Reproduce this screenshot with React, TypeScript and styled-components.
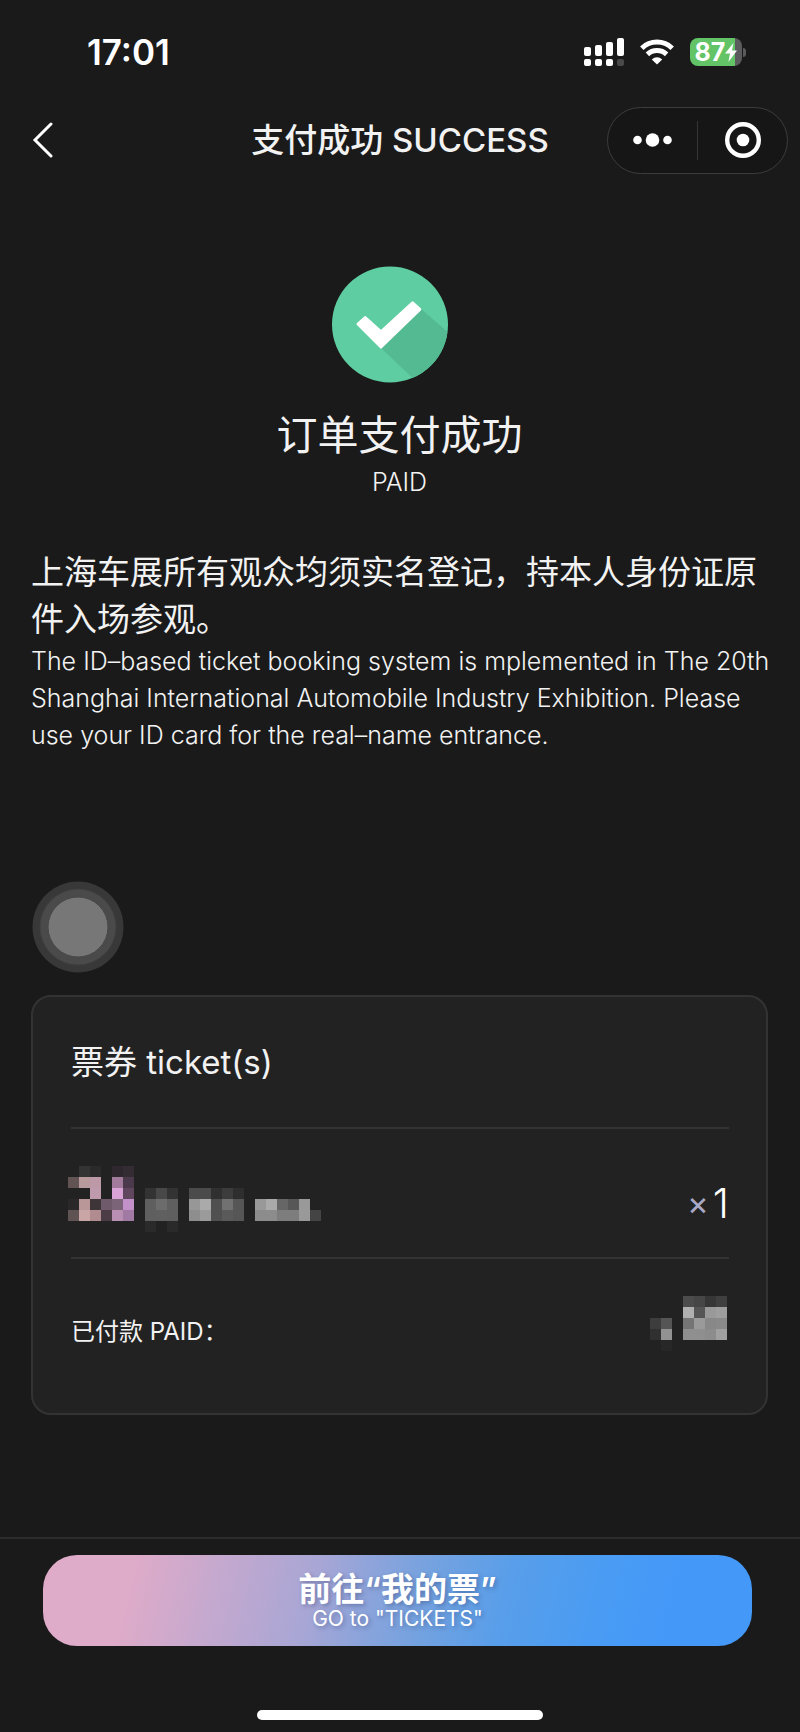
import React from "react";
import styled, { createGlobalStyle } from "styled-components";

const GlobalStyle = createGlobalStyle`
  * { box-sizing: border-box; }
  body {
    margin: 0;
    background: #1a1a1a;
    color: #f2f2f2;
    font-family: Inter, "Noto Sans CJK SC", sans-serif;
  }
  h1, h2, p { margin: 0; font-weight: 400; }
  button { font: inherit; color: inherit; border: 0; padding: 0; background: none; cursor: pointer; }
`;

const Page = styled.div`
  position: relative;
  display: flex;
  flex-direction: column;
  min-height: 100vh;
`;

const StatusBar = styled.div`
  display: flex;
  align-items: center;
  justify-content: space-between;
  height: 104px;
  padding: 0 54px 0 87px;
  color: #fff;
`;

const Clock = styled.time`
  font-size: 35px;
  line-height: 40px;
  font-weight: 600;
`;

const StatusIcons = styled.div`
  display: flex;
  align-items: center;
  gap: 16px;
`;

const Battery = styled.div`
  display: flex;
  align-items: center;
  gap: 1px;
`;

const BatteryBody = styled.div`
  display: flex;
  align-items: center;
  justify-content: center;
  width: 52px;
  height: 28px;
  border-radius: 8px;
  background: linear-gradient(90deg, #62c466 86%, #5b5b5d 86%);
  font-size: 25px;
  line-height: 28px;
  font-weight: 700;
`;

const BatteryCap = styled.span`
  width: 3px;
  height: 9px;
  border-radius: 0 3px 3px 0;
  background: #5b5b5d;
`;

const NavBar = styled.header`
  display: grid;
  grid-template-columns: 1fr auto 1fr;
  align-items: center;
  height: 72px;
  padding: 0 12px;
`;

const BackButton = styled.button`
  display: flex;
  justify-self: start;
  margin-left: 20px;
`;

const NavTitle = styled.h1`
  font-size: 33px;
  line-height: 48px;
  font-weight: 500;
  white-space: nowrap;
`;

const Capsule = styled.div`
  justify-self: end;
  display: flex;
  align-items: center;
  width: 181px;
  height: 67px;
  border: 1px solid #3c3c3c;
  border-radius: 34px;
  background: #161616;
`;

const CapsuleButton = styled.button`
  flex: 1;
  display: flex;
  align-items: center;
  justify-content: center;
  height: 100%;
`;

const CapsuleDivider = styled.span`
  width: 1px;
  height: 39px;
  background: #353535;
`;

const Main = styled.main`
  flex: 1;
  padding: 90px 32px 0 31px;
`;

const Result = styled.section`
  display: flex;
  flex-direction: column;
  align-items: center;
`;

const ResultTitle = styled.h2`
  margin-top: 22px;
  font-size: 41px;
  line-height: 60px;
`;

const ResultCaption = styled.p`
  font-size: 25px;
  line-height: 34px;
  font-weight: 300;
`;

const Notice = styled.section`
  margin: 50px -8px 0 0;
`;

const NoticeLead = styled.p`
  font-size: 33px;
  line-height: 47px;
`;

const NoticeText = styled.p`
  font-size: 25px;
  line-height: 37px;
  font-weight: 300;
`;

const TicketCard = styled.section`
  margin-top: 241px;
  padding: 0 37px 0 38px;
  border: 2px solid #333;
  border-radius: 20px;
  background: #222;
`;

const CardRow = styled.div<{ $height: number; $padTop?: number; $padBottom?: number }>`
  display: flex;
  align-items: center;
  justify-content: space-between;
  height: ${(p) => p.$height}px;
  padding-top: ${(p) => p.$padTop ?? 0}px;
  padding-bottom: ${(p) => p.$padBottom ?? 0}px;

  & + & { border-top: 2px solid #333; }
`;

const CardTitle = styled.h2`
  font-size: 33px;
  line-height: 48px;
`;

const Quantity = styled.span`
  display: flex;
  align-items: center;
  gap: 4px;
  padding-top: 8px;
  font-size: 41px;
  line-height: 48px;
  font-weight: 300;
  color: #fff;
`;

const Times = styled.span`
  font-size: 33px;
  font-weight: 400;
  color: #a9a9c6;
`;

const PaidLabel = styled.span`
  font-size: 24px;
  line-height: 36px;
`;

const AssistiveTouch = styled.button`
  position: absolute;
  left: 32px;
  top: 881px;
  display: flex;
`;

const Footer = styled.footer`
  display: flex;
  flex-direction: column;
  align-items: center;
  padding: 16px 48px 12px 43px;
  border-top: 2px solid #2c2c2c;
`;

const PrimaryButton = styled.button`
  display: flex;
  flex-direction: column;
  align-items: center;
  justify-content: center;
  width: 100%;
  height: 91px;
  border-radius: 34px;
  background: linear-gradient(104deg, #deabc9 13%, #a8a6d5 38%, #8fa4da 45%, #76a2df 53%, #589eea 65%, #4a9cf3 77%, #4498f8 88%);
  color: #fff;
  text-shadow: 2px 2px 4px rgba(40, 60, 110, 0.4);
`;

const ButtonLabel = styled.span`
  font-size: 33px;
  line-height: 36px;
  font-weight: 600;
`;

const ButtonCaption = styled.span`
  font-size: 21px;
  line-height: 24px;
`;

const HomeIndicator = styled.div`
  width: 286px;
  height: 10px;
  margin: 64px 0 0 5px;
  border-radius: 5px;
  background: #fff;
`;

const CELL = 11;

const NAME_CELLS = [
  [, "#333", "#2a2a2a", , "#2e282e", "#332d33"],
  ["#635454", "#b89a9c", "#bd98a6", , "#a27a9c", "#4b3a4b"],
  [, , "#bf9aac", , "#d9a3d6", "#60465f", , "#333", "#484848", "#333", , "#4b4b4b", "#4b4b4b", "#303030", "#3c3c3c", "#2e2e2e"],
  ["#2a2828", "#b99799", "#3d3538", "#6f5a6c", "#7b6478", "#c490c9", , "#5f5f5f", "#6c6c6c", "#5f5f5f", , "#979797", "#aaa", "#505050", "#717171", "#565656", , "#999", "#aaa", "#666", "#575757", "#999"],
  ["#5f5353", "#caa5a6", "#b08c91", "#4b3c46", "#b88eb3", "#a07aa3", , "#5f5f5f", "#606060", "#5f5f5f", , "#8e8e8e", "#9b9b9b", "#505050", "#5a5a5a", "#565656", , "#8c8c8c", "#8c8c8c", "#7d7d7d", "#7d7d7d", "#999", "#444"],
  [, , , , , , , "#2a2a2a", , "#2a2a2a"],
];

const PRICE_CELLS = [
  [, , , "#4c4c4c", "#464646", "#363636", "#3f3f3f"],
  [, , , "#b0b0b0", "#555", "#999", "#9e9e9e"],
  ["#3d3d3d", "#555", , "#757575", "#9a9a9a", "#888", "#8a8a8a"],
  ["#303030", "#929292", , "#8f8f8f", "#8f8f8f", "#8c8c8c", "#a0a0a0"],
  [, "#272727"],
];

const MosaicSvg = styled.svg<{ $lift: number }>`
  display: block;
  margin: 0 2px ${(p) => p.$lift}px -3px;
`;

function Mosaic({
  cells,
  columns,
  label,
  lift = 0,
}: {
  cells: (string | undefined)[][];
  columns: number;
  label: string;
  lift?: number;
}) {
  return (
    <MosaicSvg
      $lift={lift}
      width={columns * CELL}
      height={cells.length * CELL}
      shapeRendering="crispEdges"
      role="img"
      aria-label={label}
    >
      {cells.map((row, y) =>
        row.map((fill, x) =>
          fill ? <rect key={`${x}-${y}`} x={x * CELL} y={y * CELL} width={CELL} height={CELL} fill={fill} /> : null
        )
      )}
    </MosaicSvg>
  );
}

function SignalIcon() {
  return (
    <svg width="40" height="28" fill="#fff" aria-hidden="true">
      <rect x="0" y="9" width="7" height="9" rx="2" />
      <rect x="11" y="7" width="7" height="11" rx="2" />
      <rect x="22" y="4" width="7" height="14" rx="2" />
      <rect x="33" y="0" width="7" height="18" rx="2" />
      <rect x="0" y="21" width="7" height="7" rx="2" />
      <rect x="11" y="21" width="7" height="7" rx="2" />
      <rect x="22" y="21" width="7" height="7" rx="2" />
      <rect x="33" y="21" width="7" height="7" rx="2" fill="#4a4a4a" />
    </svg>
  );
}

function WifiIcon() {
  return (
    <svg width="34" height="26" viewBox="0 0 34 26" fill="none" stroke="#fff" strokeWidth="5" aria-hidden="true">
      <path d="M1.8 9.2 A22 22 0 0 1 32.2 9.2" />
      <path d="M7.4 15.4 A14 14 0 0 1 26.6 15.4" />
      <path d="M17 25.6 L11.8 20.4 A7.6 7.6 0 0 1 22.2 20.4 Z" fill="#fff" stroke="none" />
    </svg>
  );
}

function BoltIcon() {
  return (
    <svg width="12" height="19" viewBox="0 0 12 19" fill="#fff" aria-hidden="true">
      <path d="M8.4 0 L0 10.4 H5 L3.4 19 L12 7.6 H7 Z" />
    </svg>
  );
}

function SuccessIcon() {
  return (
    <svg width="136" height="117" viewBox="0 0 136 117" role="img" aria-label="Success">
      <defs>
        <clipPath id="disc">
          <circle cx="58" cy="58.5" r="58" />
        </clipPath>
      </defs>
      <circle cx="58" cy="58.5" r="58" fill="#5ecda1" />
      <path d="M88 42 L134 82 L110 140 L49 82 Z" fill="#54ba92" clipPath="url(#disc)" />
      <path
        d="M26 58 L33.2 51.6 L49 65.8 L80.6 36.8 L87.8 43.4 L49 81 Z"
        fill="#fff"
        stroke="#fff"
        strokeWidth="3"
        strokeLinejoin="round"
      />
    </svg>
  );
}

export default function App() {
  return (
    <Page lang="zh-CN">
      <GlobalStyle />
      <StatusBar>
        <Clock>17:01</Clock>
        <StatusIcons>
          <SignalIcon />
          <WifiIcon />
          <Battery>
            <BatteryBody>
              87
              <BoltIcon />
            </BatteryBody>
            <BatteryCap />
          </Battery>
        </StatusIcons>
      </StatusBar>

      <NavBar>
        <BackButton aria-label="Back">
          <svg width="22" height="36" fill="none" stroke="#fff" strokeWidth="3" strokeLinecap="round">
            <path d="M19 2 L3 18 L19 34" />
          </svg>
        </BackButton>
        <NavTitle>支付成功 SUCCESS</NavTitle>
        <Capsule>
          <CapsuleButton aria-label="More">
            <svg width="39" height="14" fill="#fff">
              <circle cx="4.5" cy="7" r="4.3" />
              <circle cx="19.5" cy="7" r="6.8" />
              <circle cx="34.5" cy="7" r="4.3" />
            </svg>
          </CapsuleButton>
          <CapsuleDivider />
          <CapsuleButton aria-label="Close">
            <svg width="36" height="36">
              <circle cx="18" cy="18" r="15.8" fill="none" stroke="#fff" strokeWidth="4.4" />
              <circle cx="18" cy="18" r="6.3" fill="#fff" />
            </svg>
          </CapsuleButton>
        </Capsule>
      </NavBar>

      <Main>
        <Result>
          <SuccessIcon />
          <ResultTitle>订单支付成功</ResultTitle>
          <ResultCaption>PAID</ResultCaption>
        </Result>

        <Notice>
          <NoticeLead>上海车展所有观众均须实名登记，持本人身份证原件入场参观。</NoticeLead>
          <NoticeText>
            The ID–based ticket booking system is mplemented in The 20th Shanghai International Automobile Industry
            Exhibition. Please use your ID card for the real–name entrance.
          </NoticeText>
        </Notice>

        <TicketCard>
          <CardRow $height={130}>
            <CardTitle>票券 ticket(s)</CardTitle>
          </CardRow>
          <CardRow $height={130} $padTop={12}>
            <Mosaic cells={NAME_CELLS} columns={23} label="Ticket name hidden" />
            <Quantity>
              <Times>×</Times>1
            </Quantity>
          </CardRow>
          <CardRow $height={156} $padBottom={8}>
            <PaidLabel>已付款 PAID：</PaidLabel>
            <Mosaic cells={PRICE_CELLS} columns={7} label="Amount hidden" lift={18} />
          </CardRow>
        </TicketCard>
      </Main>

      <Footer>
        <PrimaryButton>
          <ButtonLabel>前往“我的票”</ButtonLabel>
          <ButtonCaption>GO to "TICKETS"</ButtonCaption>
        </PrimaryButton>
        <HomeIndicator />
      </Footer>

      <AssistiveTouch aria-label="AssistiveTouch">
        <svg width="92" height="92">
          <circle cx="46" cy="46" r="45.5" fill="#383838" />
          <circle cx="46" cy="46" r="38" fill="#4a4a4a" stroke="#404040" strokeWidth="1" />
          <circle cx="46" cy="46" r="30" fill="#777" stroke="#484848" strokeWidth="1" />
        </svg>
      </AssistiveTouch>
    </Page>
  );
}
